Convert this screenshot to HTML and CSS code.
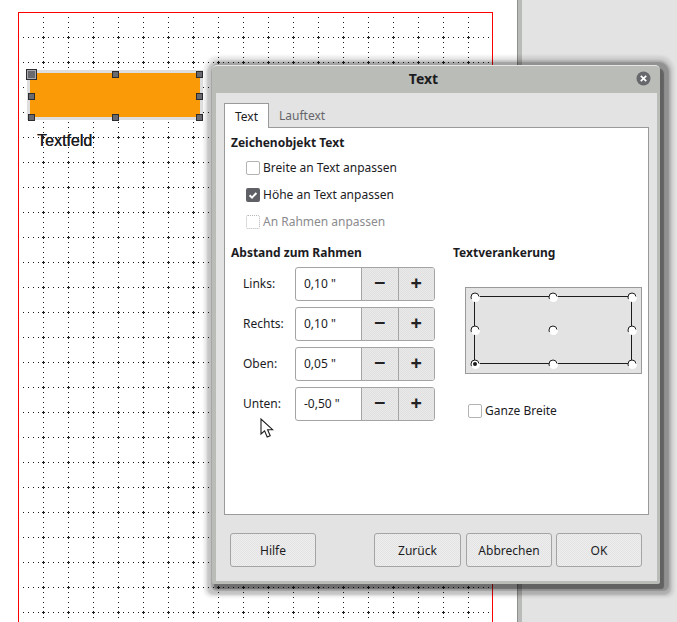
FILE: index.html
```html
<!DOCTYPE html>
<html lang="de">
<head>
<meta charset="utf-8">
<title>Text</title>
<link rel="stylesheet" href="styles.css">
</head>
<body>
<main class="stage">
  <div class="sidepane"></div>
  <div class="page"></div>
  <svg class="grid" width="466" height="605" aria-hidden="true">
    <defs>
      <pattern id="dots" x="18" y="18" width="25" height="25" patternUnits="userSpaceOnUse">
        <g fill="#1c1c1c" shape-rendering="crispEdges">
          <rect x="1" y="2" width="3" height="1"/><rect x="2" y="1" width="1" height="3"/>
          <rect x="7" y="2" width="1" height="1"/><rect x="12" y="2" width="1" height="1"/><rect x="17" y="2" width="1" height="1"/><rect x="22" y="2" width="1" height="1"/>
          <rect x="2" y="7" width="1" height="1"/><rect x="2" y="12" width="1" height="1"/><rect x="2" y="17" width="1" height="1"/><rect x="2" y="22" width="1" height="1"/>
        </g>
      </pattern>
    </defs>
    <rect width="466" height="605" fill="url(#dots)"/>
  </svg>
  <div class="shape"></div>
  <i class="handle handle-large h-tl"></i>
  <i class="handle h-tc"></i>
  <i class="handle h-tr"></i>
  <i class="handle h-ml"></i>
  <i class="handle h-mr"></i>
  <i class="handle h-bl"></i>
  <i class="handle h-bc"></i>
  <i class="handle h-br"></i>
  <div class="shape-label">Textfeld</div>

  <section class="dialog">
    <header class="titlebar">
      <h1>Text</h1>
      <span class="close">
        <svg width="15" height="15" viewBox="0 0 15 15" aria-hidden="true"><circle cx="7.5" cy="7.5" r="7" fill="#67686c"/><path d="M4.8 4.8l5.4 5.4M10.2 4.8l-5.4 5.4" stroke="#fff" stroke-width="1.7" fill="none"/></svg>
      </span>
    </header>
    <div class="body">
      <nav class="tabs">
        <span class="tab active">Text</span>
        <span class="tab">Lauftext</span>
      </nav>
      <div class="panel">
        <h2 class="heading">Zeichenobjekt Text</h2>
        <div class="checks">
          <label class="check"><span class="box"></span>Breite an Text anpassen</label>
          <label class="check"><span class="box checked"><svg width="14" height="14" viewBox="0 0 14 14" aria-hidden="true"><path d="M3.6 7.2l2.4 2.4 4.4-4.6" stroke="#fff" stroke-width="2" fill="none"/></svg></span>Höhe an Text anpassen</label>
          <label class="check disabled"><span class="box"></span>An Rahmen anpassen</label>
        </div>
        <div class="columns">
          <div class="col-left">
            <h2 class="heading">Abstand zum Rahmen</h2>
            <div class="spins">
              <div class="spin-row"><span class="spin-label">Links:</span><div class="spin"><span class="value">0,10 "</span><span class="step">−</span><span class="step">+</span></div></div>
              <div class="spin-row"><span class="spin-label">Rechts:</span><div class="spin"><span class="value">0,10 "</span><span class="step">−</span><span class="step">+</span></div></div>
              <div class="spin-row"><span class="spin-label">Oben:</span><div class="spin"><span class="value">0,05 "</span><span class="step">−</span><span class="step">+</span></div></div>
              <div class="spin-row"><span class="spin-label">Unten:</span><div class="spin"><span class="value">-0,50 "</span><span class="step">−</span><span class="step">+</span></div></div>
            </div>
          </div>
          <div class="col-right">
            <h2 class="heading">Textverankerung</h2>
            <div class="anchor">
              <svg width="177" height="87" viewBox="0 0 177 87" aria-hidden="true">
                <rect x="9.5" y="9.5" width="157" height="67" fill="none" stroke="#1c1c1c" stroke-width="1"/>
                <g class="halo">
                  <circle cx="10.5" cy="10.5" r="4.5"/><circle cx="88.5" cy="10.5" r="4.5"/><circle cx="167.5" cy="10.5" r="4.5"/>
                  <circle cx="10.5" cy="43.5" r="4.5"/><circle cx="88.5" cy="43.5" r="4.5"/><circle cx="167.5" cy="43.5" r="4.5"/>
                  <circle cx="10.5" cy="77.5" r="4.5"/><circle cx="88.5" cy="77.5" r="4.5"/><circle cx="167.5" cy="77.5" r="4.5"/>
                </g>
                <g class="dot">
                  <circle cx="10" cy="10" r="4"/><circle cx="88" cy="10" r="4"/><circle cx="167" cy="10" r="4"/>
                  <circle cx="10" cy="43" r="4"/><circle cx="88" cy="43" r="4"/><circle cx="167" cy="43" r="4"/>
                  <circle cx="10" cy="77" r="4"/><circle cx="88" cy="77" r="4"/><circle cx="167" cy="77" r="4"/>
                </g>
                <circle cx="10" cy="77" r="2" fill="#1c1c1c"/>
              </svg>
            </div>
            <label class="check full"><span class="box"></span>Ganze Breite</label>
          </div>
        </div>
      </div>
      <footer class="actions">
        <button class="btn">Hilfe</button>
        <span class="spacer"></span>
        <button class="btn btn-back">Zurück</button>
        <button class="btn">Abbrechen</button>
        <button class="btn">OK</button>
      </footer>
    </div>
  </section>

  <svg class="cursor" width="15" height="21" viewBox="0 0 15 21" aria-hidden="true">
    <path d="M1 1v15l3.6-3.2 2.6 6.2 3-1.3-2.6-6h5z" fill="#fff" stroke="#1c1c1c" stroke-width="1.1" stroke-linejoin="miter"/>
  </svg>
</main>
</body>
</html>
```
FILE: styles.css
```css
* { box-sizing: border-box; }
html, body { margin: 0; padding: 0; background: #fff; }
body { font-family: "Noto Sans", "Open Sans", sans-serif; font-size: 12px; color: #1c1c1f; }

.stage { position: relative; width: 677px; height: 622px; overflow: hidden; background: #fff; }

/* drawing canvas behind the dialog */
.sidepane { position: absolute; left: 517px; top: 0; width: 160px; height: 622px; background: #e3e3e3; border-left: 1px solid #8f8f8f; box-shadow: inset 4px 0 0 #b9bbb8; }
.page { position: absolute; left: 18px; top: 12px; width: 475px; height: 620px; border: 1px solid #f00; }
.grid { position: absolute; left: 23px; top: 17px; }
.shape { position: absolute; left: 30px; top: 73px; width: 170px; height: 44px; background: #fb9a07; box-shadow: 0 0 0 3px #dedede; }
.handle { position: absolute; width: 7px; height: 7px; margin: -3px 0 0 -3px; background: #696a70; border: 1px solid #2b2b30; }
.handle-large { width: 11px; height: 11px; margin: -5px 0 0 -5px; box-shadow: inset 0 0 0 1px #a9a9ae; }
.h-tl { left: 31px; top: 74px; }
.h-tc { left: 115px; top: 74px; }
.h-tr { left: 199px; top: 74px; }
.h-ml { left: 31px; top: 96px; }
.h-mr { left: 199px; top: 96px; }
.h-bl { left: 31px; top: 117px; }
.h-bc { left: 115px; top: 117px; }
.h-br { left: 199px; top: 117px; }
.shape-label { position: absolute; left: 37px; top: 132px; font-family: "Liberation Sans", Arial, sans-serif; font-size: 16px; line-height: 18px; color: #1c1c1f; text-shadow: 0.3px 0 #1c1c1f; }

/* dialog window */
.dialog {
  position: absolute; left: 212px; top: 65px; width: 448px; height: 519px;
  display: flex; flex-direction: column;
  padding: 0 3px 3px 4px;
  background: #babcb8;
  border-top: 1px solid #e6e6e6;
  border-radius: 5px 5px 2px 2px;
  box-shadow:
    3px 4px 1px 1px rgba(0,0,0,.32),
    4px 2px 1px 5px rgba(0,0,0,.17),
    3px 3px 2px 8px rgba(0,0,0,.15),
    3px 2px 3px 11px rgba(0,0,0,.09);
}
.titlebar { position: relative; height: 27px; flex: none; display: flex; align-items: center; justify-content: center; padding-right: 26px; }
.titlebar h1 { margin: 0; font-size: 14px; line-height: 18px; font-weight: 700; color: #1c1c1f; position: relative; top: -1px; }
.close { position: absolute; right: 6px; top: 5px; width: 15px; height: 15px; line-height: 0; }
.body { flex: 1; display: flex; flex-direction: column; padding: 10px 8px 14px; background: #e3e3e3; }

.tabs { display: flex; height: 25px; flex: none; position: relative; z-index: 1; }
.tab { width: 73px; padding-top: 4px; padding-left: 10px; color: #66666a; line-height: 17px; }
.tab.active { width: 45px; color: #1c1c1f; background: #fff; border: 1px solid #9a9a9a; border-bottom: 0; }
.panel { height: 388px; flex: none; margin-top: -1px; background: #fff; border: 1px solid #9a9a9a; padding: 7px 6px 0; }

.heading { margin: 0; font-size: 12px; font-weight: 700; line-height: 16px; color: #1c1c1f; }
.checks { margin: 3px 0 0 15px; display: flex; flex-direction: column; }
.check { display: flex; align-items: center; height: 27px; gap: 3px; }
.box { width: 14px; height: 14px; flex: none; border: 1px solid #b3b3b3; border-radius: 2px; background: #fff; line-height: 0; }
.box.checked { border: 0; background: #5f6066; }
.check.disabled { color: #8b8b8e; }
.check.disabled .box { border: 1px dotted #b5b5b5; }

.columns { display: flex; margin-top: 10px; }
.col-left { width: 222px; flex: none; }
.col-right { flex: 1; }
.spins { display: flex; flex-direction: column; gap: 6px; margin-top: 6px; }
.spin-row { display: flex; align-items: center; height: 34px; }
.spin-label { width: 64px; padding: 0 0 2px 12px; flex: none; }
.spin { width: 140px; height: 34px; display: flex; border: 1px solid #a4a4a4; border-radius: 3px; background: #fff; overflow: hidden; }
.value { width: 65px; padding-left: 8px; line-height: 31px; flex: none; }
.step { flex: 1; border-left: 1px solid #a4a4a4; text-align: center; font-size: 20px; font-weight: 700; line-height: 30px; color: #222226; background: repeating-conic-gradient(#e0e0e0 0 25%, #eaeaea 0 50%) 0 0 / 2px 2px; }

.anchor { width: 177px; height: 87px; margin: 26px 0 0 12px; background: #e3e3e3; border: 1px solid #9a9a9a; }
.anchor svg { display: block; margin: -1px; }
.halo circle { fill: #fff; }
.dot circle { fill: #fff; stroke: #1c1c1c; stroke-width: 1; stroke-dasharray: 14 20; stroke-dashoffset: -10; }
.check.full { margin: 23px 0 0 15px; }

.actions { display: flex; gap: 4px; margin-top: 18px; padding: 0 7px 0 6px; flex: none; }
.spacer { flex: 1; }
.btn { width: 86px; height: 34px; padding: 0; border: 1px solid #a4a4a4; border-radius: 3px; font: inherit; color: #1c1c1f; background: repeating-conic-gradient(#e3e3e3 0 25%, #eeeeee 0 50%) 0 0 / 2px 2px; }
.btn-back { width: 87px; margin-right: 1px; }

.cursor { position: absolute; left: 260px; top: 418px; }
```
